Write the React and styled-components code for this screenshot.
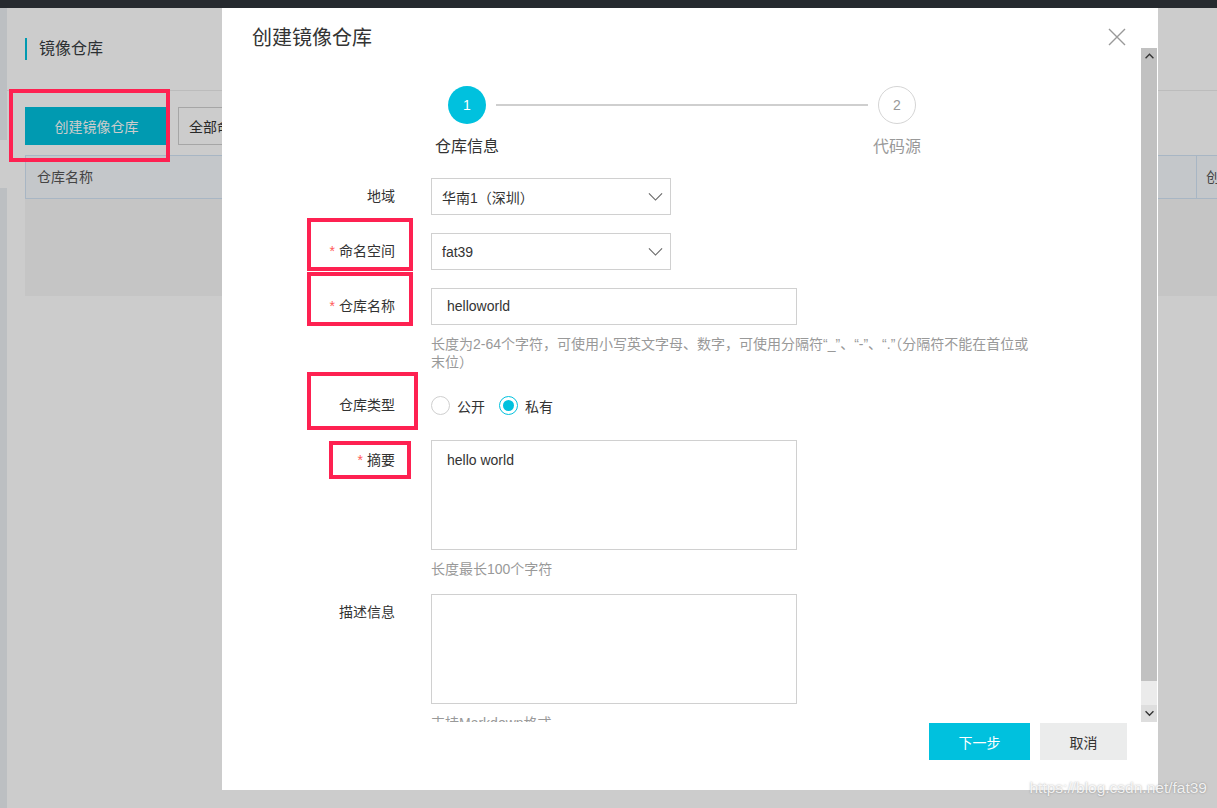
import styled, { createGlobalStyle } from "styled-components";

const FONT = `"Liberation Sans", "Noto Sans CJK SC", sans-serif`;

const GlobalStyle = createGlobalStyle`
  html, body { margin: 0; padding: 0; }
  body { font-family: ${FONT}; background: #cdcdcd; }
  * { box-sizing: border-box; }
`;

const Stage = styled.div`
  position: relative;
  width: 1217px;
  height: 808px;
  overflow: hidden;
  background: #fff;
`;

// ---------- page behind the dialog ----------
const TopBar = styled.div`
  height: 8px;
  background: #30353b;
`;

const PageBody = styled.div`
  display: flex;
  height: 800px;
`;

const Sidebar = styled.div`
  width: 7px;
  display: flex;
  flex-direction: column;
  background: #ebeff3;
`;

const SideItem = styled.div`
  height: ${(p) => p.h}px;
  background: ${(p) => (p.active ? "#ffffff" : "transparent")};
`;

const Main = styled.div`
  flex: 1;
  min-width: 0;
`;

const PageHeader = styled.div`
  height: 83px;
  padding: 30px 0 0 18px;
  border-bottom: 1px solid #ececec;
`;

const PageTitle = styled.div`
  height: 22px;
  line-height: 22px;
  border-left: 2px solid #00c1de;
  padding-left: 12px;
  font-size: 16px;
  color: #373d41;
`;

const Toolbar = styled.div`
  display: flex;
  gap: 10px;
  padding: 16px 0 0 18px;
`;

const PageButton = styled.button`
  height: 38px;
  width: ${(p) => p.w}px;
  border: ${(p) => (p.primary ? "none" : "1px solid #d0d0d0")};
  background: ${(p) => (p.primary ? "#00c1de" : "#fff")};
  color: ${(p) => (p.primary ? "#fff" : "#333")};
  font: 14px ${FONT};
  text-align: ${(p) => (p.primary ? "center" : "left")};
  padding: 0 10px;
  white-space: nowrap;
  overflow: hidden;
`;

const Table = styled.div`
  margin: 10px 0 0 18px;
  width: 1300px;
`;

const TableHead = styled.div`
  display: flex;
  height: 44px;
  background: #f5f9fd;
  border: 1px solid #d2e4f5;
`;

const HeadCell = styled.div`
  flex: ${(p) => (p.w ? `0 0 ${p.w}px` : 1)};
  line-height: 42px;
  padding-left: ${(p) => (p.w ? 9 : 11)}px;
  font-size: 14px;
  color: #555;
  border-left: ${(p) => (p.w ? "1px solid #d2e4f5" : "none")};
`;

const TableBody = styled.div`
  height: 97px;
  background: #f7f7f7;
`;

const Overlay = styled.div`
  position: absolute;
  inset: 0;
  background: rgba(0, 0, 0, 0.2);
`;

// ---------- dialog ----------
const Dialog = styled.div`
  position: absolute;
  left: 222px;
  top: 8px;
  width: 936px;
  height: 782px;
  background: #fff;
  display: flex;
  flex-direction: column;
`;

const DialogHeader = styled.div`
  height: 40px;
  padding: 18px 32px 0 30px;
  display: flex;
  justify-content: space-between;
  align-items: flex-start;
`;

const DialogTitle = styled.div`
  font-size: 20px;
  line-height: 24px;
  color: #333;
`;

const CloseBtn = styled.div`
  margin-top: 2px;
  width: 18px;
  height: 18px;
`;

const DialogBody = styled.div`
  display: flex;
  height: 674px;
`;

const Content = styled.div`
  flex: 1;
  overflow: hidden;
  padding-top: 38px;
`;

const ScrollBar = styled.div`
  width: 16px;
  margin-right: 1px;
  display: flex;
  flex-direction: column;
`;

const ScrollArrow = styled.div`
  height: 17px;
  background: ${(p) => p.bg};
  display: flex;
  align-items: center;
  justify-content: center;
`;

const ScrollThumb = styled.div`
  flex: 1;
  background: #c1c1c1;
`;

const ScrollTrack = styled.div`
  height: 24px;
  background: #ebebeb;
`;

const Steps = styled.div`
  display: flex;
  margin-left: 226px;
  margin-bottom: 21px;
`;

const Step = styled.div`
  width: 38px;
  display: flex;
  flex-direction: column;
  align-items: center;
`;

const StepCircle = styled.div`
  width: 38px;
  height: 38px;
  border-radius: 50%;
  display: flex;
  align-items: center;
  justify-content: center;
  font-size: 14px;
  background: ${(p) => (p.active ? "#00c1de" : "#fff")};
  border: ${(p) => (p.active ? "none" : "1px solid #d5d5d5")};
  color: ${(p) => (p.active ? "#fff" : "#999")};
`;

const StepLabel = styled.div`
  margin-top: 13px;
  font-size: 16px;
  line-height: 20px;
  white-space: nowrap;
  color: ${(p) => (p.active ? "#333" : "#999")};
`;

const StepLine = styled.div`
  width: 372px;
  height: 2px;
  margin: 18px 10px 0;
  background: #cfcfcf;
`;

const FormRow = styled.div`
  display: flex;
  gap: 36px;
  margin-bottom: ${(p) => p.mb ?? 18}px;
`;

const Label = styled.div`
  width: 173px;
  flex-shrink: 0;
  text-align: right;
  font-size: 14px;
  line-height: ${(p) => (p.top ? "20px" : "37px")};
  padding-top: ${(p) => p.top ?? 0}px;
  color: #333;
`;

const Star = styled.span`
  color: #ff5a5a;
  margin-right: 4px;
`;

const Field = styled.div`
  display: flex;
  flex-direction: column;
`;

const SelectBox = styled.div`
  width: 240px;
  height: 37px;
  border: 1px solid #d0d0d0;
  padding: 0 7px 0 10px;
  display: flex;
  align-items: center;
  justify-content: space-between;
  font-size: 14px;
  color: #333;
`;

const TextInput = styled.div`
  width: 366px;
  height: 37px;
  border: 1px solid #d0d0d0;
  padding-left: 15px;
  line-height: 35px;
  font-size: 14px;
  color: #333;
`;

const TextArea = styled.div`
  width: 366px;
  height: 110px;
  border: 1px solid #d0d0d0;
  padding: 10px 15px;
  font-size: 14px;
  line-height: 18px;
  color: #333;
`;

const Help = styled.div`
  margin-top: 10px;
  width: ${(p) => p.w ?? 366}px;
  font-size: 14px;
  line-height: 18px;
  color: #999;
`;

const RadioGroup = styled.div`
  display: flex;
  align-items: center;
  height: 37px;
  font-size: 14px;
  color: #333;
`;

const Radio = styled.span`
  width: 19px;
  height: 19px;
  border-radius: 50%;
  border: 1px solid ${(p) => (p.checked ? "#00c1de" : "#cfcfcf")};
  display: inline-flex;
  align-items: center;
  justify-content: center;
  margin-right: 7px;
  &::after {
    content: "";
    width: 11px;
    height: 11px;
    border-radius: 50%;
    background: ${(p) => (p.checked ? "#00c1de" : "transparent")};
  }
`;

const RadioText = styled.span`
  margin-right: 14px;
`;

const Footer = styled.div`
  display: flex;
  justify-content: flex-end;
  gap: 10px;
  padding: 1px 31px 0 0;
`;

const FooterButton = styled.button`
  height: 37px;
  width: ${(p) => p.w}px;
  border: none;
  font: 14px ${FONT};
  background: ${(p) => (p.primary ? "#00c1de" : "#ebecec")};
  color: ${(p) => (p.primary ? "#fff" : "#333")};
`;

// ---------- annotations on top ----------
const Mark = styled.div`
  position: absolute;
  left: ${(p) => p.x}px;
  top: ${(p) => p.y}px;
  width: ${(p) => p.w}px;
  height: ${(p) => p.h}px;
  border: 4px solid #fe2151;
`;

const Watermark = styled.div`
  position: absolute;
  right: 10px;
  bottom: 11px;
  font: 15.5px "Liberation Sans", sans-serif;
  color: rgba(255, 255, 255, 0.85);
  text-shadow: 0 0 2px rgba(0, 0, 0, 0.35);
`;

const Chevron = ({ up, size = 15, color = "#666", sw = 1.2 }) => (
  <svg width={size} height={size / 2 + 2} viewBox="0 0 16 9">
    <polyline
      points={up ? "1,8 8,1 15,8" : "1,1 8,8 15,1"}
      fill="none"
      stroke={color}
      strokeWidth={sw}
    />
  </svg>
);

const CloseIcon = () => (
  <svg width="18" height="18" viewBox="0 0 18 18">
    <path d="M1 1 L17 17 M17 1 L1 17" stroke="#999" strokeWidth="1.4" />
  </svg>
);

const App = () => {
  return (
    <>
      <GlobalStyle />
      <Stage>
        <TopBar />
        <PageBody>
          <Sidebar>
            <SideItem h={132} />
            <SideItem h={48} active />
          </Sidebar>
          <Main>
            <PageHeader>
              <PageTitle>镜像仓库</PageTitle>
            </PageHeader>
            <Toolbar>
              <PageButton primary w={143}>创建镜像仓库</PageButton>
              <PageButton w={120}>全部命名空间</PageButton>
            </Toolbar>
            <Table>
              <TableHead>
                <HeadCell>仓库名称</HeadCell>
                <HeadCell w={128}>创建时间</HeadCell>
              </TableHead>
              <TableBody />
            </Table>
          </Main>
        </PageBody>
        <Overlay />

        <Dialog>
          <DialogHeader>
            <DialogTitle>创建镜像仓库</DialogTitle>
            <CloseBtn>
              <CloseIcon />
            </CloseBtn>
          </DialogHeader>

          <DialogBody>
            <Content>
              <Steps>
                <Step>
                  <StepCircle active>1</StepCircle>
                  <StepLabel active>仓库信息</StepLabel>
                </Step>
                <StepLine />
                <Step>
                  <StepCircle>2</StepCircle>
                  <StepLabel>代码源</StepLabel>
                </Step>
              </Steps>

              <FormRow>
                <Label>地域</Label>
                <SelectBox>
                  华南1（深圳）
                  <Chevron />
                </SelectBox>
              </FormRow>

              <FormRow>
                <Label>
                  <Star>*</Star>命名空间
                </Label>
                <SelectBox>
                  fat39
                  <Chevron />
                </SelectBox>
              </FormRow>

              <FormRow mb={16}>
                <Label>
                  <Star>*</Star>仓库名称
                </Label>
                <Field>
                  <TextInput>helloworld</TextInput>
                  <Help w={604}>
                    长度为2-64个字符，可使用小写英文字母、数字，可使用分隔符“_”、“-”、“.”（分隔符不能在首位或末位）
                  </Help>
                </Field>
              </FormRow>

              <FormRow mb={16}>
                <Label>仓库类型</Label>
                <RadioGroup>
                  <Radio />
                  <RadioText>公开</RadioText>
                  <Radio checked />
                  <RadioText>私有</RadioText>
                </RadioGroup>
              </FormRow>

              <FormRow mb={16}>
                <Label top={10}>
                  <Star>*</Star>摘要
                </Label>
                <Field>
                  <TextArea>hello world</TextArea>
                  <Help>长度最长100个字符</Help>
                </Field>
              </FormRow>

              <FormRow>
                <Label top={8}>描述信息</Label>
                <Field>
                  <TextArea />
                  <Help>支持Markdown格式</Help>
                </Field>
              </FormRow>
            </Content>

            <ScrollBar>
              <ScrollArrow bg="#c1c1c1">
                <Chevron up size={9} color="#333" sw={2.4} />
              </ScrollArrow>
              <ScrollThumb />
              <ScrollTrack />
              <ScrollArrow bg="#dedede">
                <Chevron size={9} color="#333" sw={2.4} />
              </ScrollArrow>
            </ScrollBar>
          </DialogBody>

          <Footer>
            <FooterButton primary w={101}>下一步</FooterButton>
            <FooterButton w={87}>取消</FooterButton>
          </Footer>
        </Dialog>

        <Mark x={9} y={89} w={161} h={73} />
        <Mark x={307} y={218} w={106} h={53} />
        <Mark x={307} y={272} w={106} h={54} />
        <Mark x={307} y={372} w={111} h={58} />
        <Mark x={329} y={441} w={82} h={38} />

        <Watermark>https://blog.csdn.net/fat39</Watermark>
      </Stage>
    </>
  );
};

export default App;
